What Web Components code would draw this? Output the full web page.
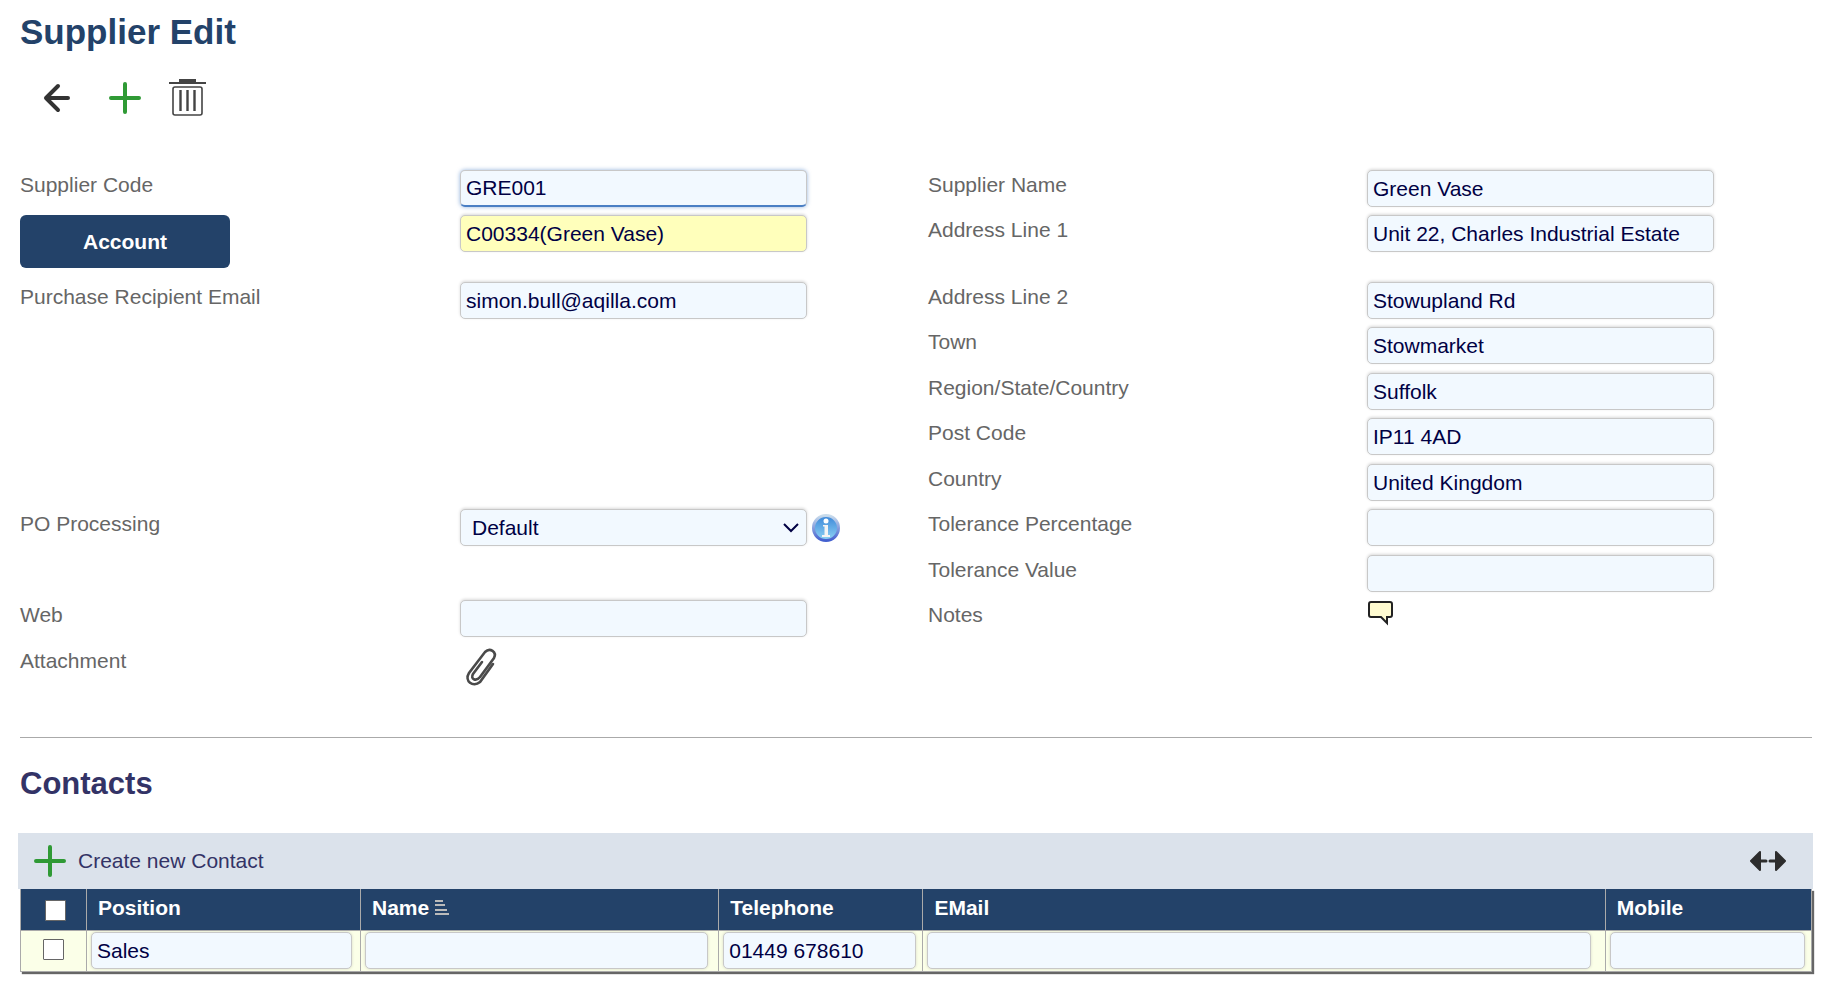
<!DOCTYPE html>
<html lang="en">
<head>
<meta charset="utf-8">
<title>Supplier Edit</title>
<style>
    body {
        margin: 0;
        background: #fff;
        font-family: Arial, "Liberation Sans", sans-serif;
        font-size: 21px;
        line-height: 24px;
        color: #666;
    }
</style>
</head>
<body>

<template id="iconButtonTemplate">
    <style>
        :host { display: inline-flex; }
        button {
            display: flex;
            align-items: center;
            gap: 12px;
            padding: 0;
            border: 0;
            background: none;
            font: inherit;
            color: inherit;
            cursor: pointer;
        }
        svg { display: block; }
    </style>
    <button type="button"><span id="icon"></span><slot></slot></button>
</template>

<template id="fieldTemplate">
    <style>
        :host {
            display: grid;
            grid-column: 1 / span 2;
            grid-template-columns: subgrid;
            align-items: start;
        }
        :host([side="right"]) { grid-column: 3 / span 2; }
        .name { padding-top: 3px; }
        ::slotted([slot="label"]) { justify-self: start; }
        .control {
            display: flex;
            align-items: center;
            gap: 5px;
        }
        input, select {
            box-sizing: border-box;
            width: 100%;
            max-width: 347px;
            height: 37px;
            padding: 0 5px;
            border: 1px solid #c8c8c8;
            border-radius: 5px;
            background: #f2f9ff;
            box-shadow: 0 -1px 3px rgba(0, 0, 0, .15);
            font: inherit;
            color: #004;
            outline: none;
        }
        select {
            appearance: none;
            padding: 0 11px;
            grid-area: 1 / 1;
        }
        .select {
            display: grid;
            align-items: center;
            width: 100%;
            max-width: 347px;
        }
        .select svg {
            grid-area: 1 / 1;
            justify-self: end;
            margin-right: 8px;
            pointer-events: none;
        }
        :host([kind="lookup"]) input { background: #ffffbb; }
        :host([active]) input {
            border-bottom: 2px solid #4a7fc4;
            box-shadow: 0 0 4px rgba(74, 127, 196, .6);
        }
    </style>
    <slot name="label"><label class="name" for="control"></label></slot>
    <div class="control"><slot></slot></div>
</template>

<template id="actionTemplate">
    <style>
        :host { display: block; }
        button {
            width: 210px;
            height: 53px;
            border: 0;
            border-radius: 6px;
            background: #234269;
            color: #fff;
            font: inherit;
            font-weight: bold;
            cursor: pointer;
        }
    </style>
    <button type="button"><slot></slot></button>
</template>

<template id="contactsTemplate">
    <style>
        :host { display: block; }
        .bar {
            display: flex;
            align-items: center;
            justify-content: space-between;
            height: 56px;
            padding: 0 26px 0 16px;
            margin: 0 -1px 0 -2px;
            background: #dbe2eb;
            color: #336;
        }
        .frame { box-shadow: 2px 2px 1px #666; }
        table {
            width: 100%;
            table-layout: fixed;
            border-collapse: collapse;
        }
        th, td {
            box-sizing: border-box;
            padding: 0 0 0 4px;
            border: 1px solid #aaa;
        }
        th {
            height: 41px;
            padding: 0 0 2px 11px;
            border-top: 0;
            background: #234269;
            color: #fff;
            text-align: left;
        }
        td {
            height: 41px;
            background: #fbffe8;
        }
        .pick {
            width: 66px;
            padding: 0 0 4px;
            text-align: center;
        }
        th.pick { padding: 0 0 0 4px; }
        input[type="text"] {
            display: block;
            box-sizing: border-box;
            width: 97%;
            height: 37px;
            padding: 0 5px;
            border: 1px solid #c8c8c8;
            border-radius: 5px;
            background: #f2f9ff;
            box-shadow: 0 0 3px rgba(0, 0, 0, .15);
            font: inherit;
            color: #004;
        }
        input[type="text"].wide { width: 98%; }
        input[type="checkbox"] {
            appearance: none;
            display: inline-block;
            box-sizing: border-box;
            width: 21px;
            height: 21px;
            margin: 0;
            border: 1px solid #666;
            border-radius: 1px;
            background: #fff;
            vertical-align: middle;
        }
        th svg { margin-left: 6px; }
    </style>
    <div class="bar">
        <icon-button icon="plus">Create new Contact</icon-button>
        <icon-button icon="resize" label="Resize columns"></icon-button>
    </div>
    <div class="frame">
        <table>
            <thead><tr></tr></thead>
            <tbody></tbody>
        </table>
    </div>
</template>

<template id="pageTemplate">
    <style>
        :host {
            display: block;
            padding: 12px 25px 24px 20px;
        }
        h1, h2 {
            margin: 0;
            line-height: 40px;
        }
        h1 {
            font-size: 35px;
            color: #234269;
        }
        h2 {
            font-size: 31px;
            color: #336;
        }
        nav {
            display: flex;
            align-items: center;
            gap: 28px;
            padding: 26px 0 0 20px;
        }
        .fields {
            display: grid;
            grid-template-columns: minmax(0, 440fr) minmax(0, 468fr) minmax(0, 439fr) minmax(0, 445fr);
            grid-template-rows: 37px 59px;
            grid-auto-rows: 37px 38px;
            row-gap: 8px;
            padding-top: 52px;
        }
        hr {
            margin: 54px 0 26px;
            border: 0;
            border-top: 1px solid #aaa;
        }
        contact-table { margin-top: 29px; }
        .clip { margin-left: 4px; }
    </style>
    <h1>Supplier Edit</h1>
    <nav>
        <icon-button icon="back" label="Back"></icon-button>
        <icon-button icon="plus" label="New supplier"></icon-button>
        <icon-button icon="trash" label="Delete"></icon-button>
    </nav>
    <div class="fields">
        <form-field label="Supplier Code" value="GRE001" row="1" active></form-field>
        <form-field label="Account" kind="lookup" value="C00334(Green Vase)" row="2">
            <action-button slot="label">Account</action-button>
        </form-field>
        <form-field label="Purchase Recipient Email" value="simon.bull@aqilla.com" row="3"></form-field>
        <form-field label="PO Processing" kind="select" value="Default" row="8">
            <icon-button icon="info" label="About PO processing"></icon-button>
        </form-field>
        <form-field label="Web" row="10"></form-field>
        <form-field label="Attachment" kind="icon" row="11">
            <icon-button class="clip" icon="clip" label="Attach a file"></icon-button>
        </form-field>

        <form-field side="right" label="Supplier Name" value="Green Vase" row="1"></form-field>
        <form-field side="right" label="Address Line 1" value="Unit 22, Charles Industrial Estate" row="2"></form-field>
        <form-field side="right" label="Address Line 2" value="Stowupland Rd" row="3"></form-field>
        <form-field side="right" label="Town" value="Stowmarket" row="4"></form-field>
        <form-field side="right" label="Region/State/Country" value="Suffolk" row="5"></form-field>
        <form-field side="right" label="Post Code" value="IP11 4AD" row="6"></form-field>
        <form-field side="right" label="Country" value="United Kingdom" row="7"></form-field>
        <form-field side="right" label="Tolerance Percentage" row="8"></form-field>
        <form-field side="right" label="Tolerance Value" row="9"></form-field>
        <form-field side="right" label="Notes" kind="icon" row="10">
            <icon-button icon="note" label="Notes"></icon-button>
        </form-field>
    </div>
    <hr>
    <h2>Contacts</h2>
    <contact-table></contact-table>
</template>

<supplier-page></supplier-page>

<script>
    ((customElements, document) => {
        'use strict';

        const icons = {
            back: `<svg width="41" height="40" viewBox="0 0 41 40" fill="none" stroke="#333" stroke-width="4" stroke-linecap="round" stroke-linejoin="round">
                <path d="M18 8 6 20 18 32M6 20H28"/></svg>`,
            plus: `<svg width="32" height="32" viewBox="0 0 32 32" fill="none" stroke="#2f9a35" stroke-width="4" stroke-linecap="round">
                <path d="M16 2V30M2 16H30"/></svg>`,
            trash: `<svg width="37" height="38" viewBox="0 0 37 38" fill="none" stroke="#444">
                <path d="M10 0H27V3H37V5H0V3H10Z" fill="#444" stroke="none"/>
                <rect x="4" y="8" width="29" height="28" rx="2" stroke-width="1.6"/>
                <path d="M11.5 11V32M18.5 11V32M25.5 11V32" stroke-width="2.4"/></svg>`,
            info: `<svg width="28" height="28" viewBox="0 0 28 28">
                <defs>
                    <linearGradient id="g" x2="0" y2="1"><stop offset="0" stop-color="#3b86d8"/><stop offset="1" stop-color="#8fd4f5"/></linearGradient>
                    <linearGradient id="r" x2="0" y2="1"><stop offset="0" stop-color="#c9dcec"/><stop offset="1" stop-color="#4360cf"/></linearGradient>
                </defs>
                <circle cx="14" cy="14" r="12.5" fill="url(#g)" stroke="url(#r)" stroke-width="3"/>
                <circle cx="14" cy="7" r="2.5" fill="#fff"/>
                <path d="M11 11H16V21H18V23H10V21H12.500V12.500H11Z" fill="#f4f4f4"/></svg>`,
            clip: `<svg width="34" height="42" viewBox="0 0 34 42" fill="none" stroke="#4a4a4a" stroke-width="2.6" stroke-linecap="round">
                <path d="M18 16 9 28C6 33 12 36 16 31L30 12C33 6 26 1 21 6L5 27C0 35 9 42 16 36L29 18"/></svg>`,
            note: `<svg width="27" height="26" viewBox="0 0 27 26">
                <path d="M4 2H23Q25 2 25 4V15Q25 17 23 17H20V23L14 17H4Q2 17 2 15V4Q2 2 4 2Z" fill="#fffbd0" stroke="#222" stroke-width="2"/></svg>`,
            resize: `<svg width="38" height="22" viewBox="0 0 38 22" fill="#2d2d2d" stroke="#2d2d2d" stroke-linejoin="round">
                <path d="M2 11 11 2V20ZM36 11 27 2V20Z" stroke-width="2"/>
                <path d="M11 11H17M21 11H27" stroke-width="3" stroke-linecap="round"/></svg>`,
            sort: `<svg width="14" height="15" viewBox="0 0 14 15" fill="#bbb">
                <path d="M0 0H8V2H0ZM0 4H10V6H0ZM0 9H12V11H0ZM0 13H14V15H0Z"/></svg>`,
            chevron: `<svg width="16" height="10" viewBox="0 0 16 10" fill="none" stroke="#004" stroke-width="2">
                <path d="M1 1 8 8 15 1"/></svg>`
        };

        const stamp = (host, id) => {
            const root = host.attachShadow({mode: 'open'});
            root.appendChild(document.importNode(document.getElementById(id).content, true));
            return root;
        };

        class IconButtonElement extends HTMLElement {
            connectedCallback() {
                if (this.shadowRoot) return;
                const root = stamp(this, 'iconButtonTemplate');
                root.querySelector('#icon').innerHTML = icons[this.getAttribute('icon')];
                const label = this.getAttribute('label');
                if (label) root.querySelector('button').setAttribute('aria-label', label);
            }
        }

        class ActionButtonElement extends HTMLElement {
            constructor() {
                super();
                stamp(this, 'actionTemplate');
            }
        }

        class FormFieldElement extends HTMLElement {
            connectedCallback() {
                if (this.shadowRoot) return;
                const root = stamp(this, 'fieldTemplate');
                const label = this.getAttribute('label');
                const kind = this.getAttribute('kind');
                const value = this.getAttribute('value') || '';
                const box = root.querySelector('.control');
                this.style.gridRow = this.getAttribute('row');
                root.querySelector('label').textContent = label;
                if (kind === 'icon') {
                    box.id = 'control';
                    return;
                }
                if (kind === 'select') {
                    box.insertAdjacentHTML('afterbegin',
                        `<div class="select"><select id="control"><option>${value}</option></select>${icons.chevron}</div>`);
                    return;
                }
                const input = document.createElement('input');
                input.type = 'text';
                input.id = 'control';
                input.value = value;
                if (kind === 'lookup') input.setAttribute('aria-label', label);
                box.prepend(input);
            }
        }

        class ContactTableElement extends HTMLElement {
            constructor() {
                super();
                const root = stamp(this, 'contactsTemplate');
                // widths are shares of the table
                const columns = [
                    {name: 'Position', width: '15.3%'},
                    {name: 'Name', width: '20%', sorted: true},
                    {name: 'Telephone', width: '11.4%'},
                    {name: 'EMail', width: '38.1%', wide: true},
                    {name: 'Mobile'}
                ];
                const contacts = [{Position: 'Sales', Telephone: '01449 678610'}];

                root.querySelector('thead tr').innerHTML =
                    '<th class="pick"><input type="checkbox" aria-label="Select all"></th>' +
                    columns.map(c => `<th style="width:${c.width || 'auto'}">${c.name}${c.sorted ? icons.sort : ''}</th>`).join('');
                root.querySelector('tbody').innerHTML = contacts.map(row =>
                    '<tr><td class="pick"><input type="checkbox" aria-label="Select row"></td>' +
                    columns.map(c => `<td><input type="text" class="${c.wide ? 'wide' : ''}" aria-label="${c.name}" value="${row[c.name] || ''}"></td>`).join('') +
                    '</tr>').join('');
            }
        }

        class SupplierPageElement extends HTMLElement {
            constructor() {
                super();
                stamp(this, 'pageTemplate');
            }
        }

        customElements.define('icon-button', IconButtonElement);
        customElements.define('action-button', ActionButtonElement);
        customElements.define('form-field', FormFieldElement);
        customElements.define('contact-table', ContactTableElement);
        customElements.define('supplier-page', SupplierPageElement);
    })(window.customElements, document);
</script>
</body>
</html>
